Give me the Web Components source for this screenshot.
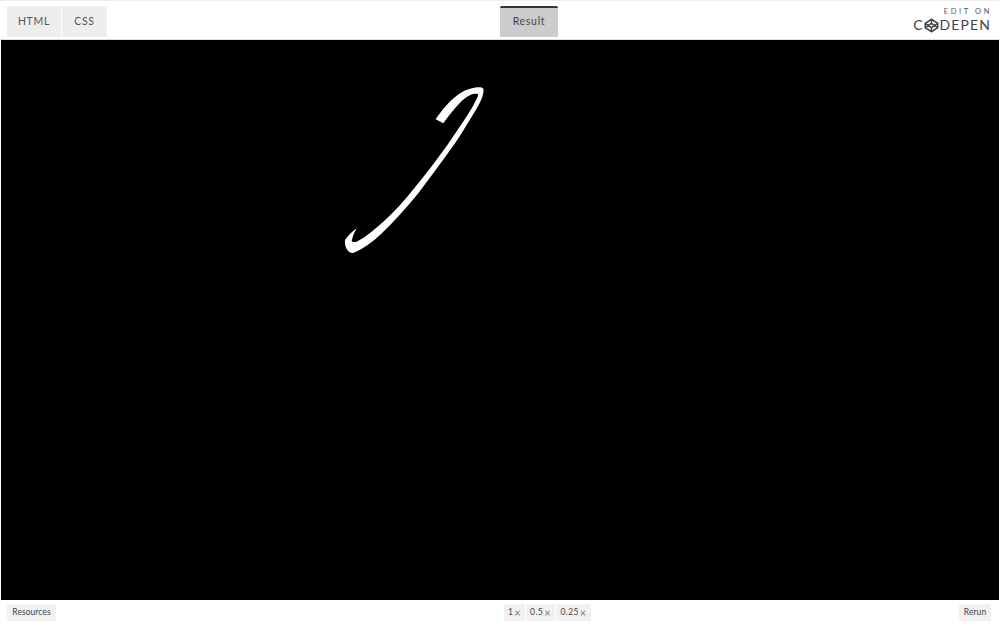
<!DOCTYPE html>
<html lang="en">
<head>
<meta charset="utf-8">
<title>CodePen embed</title>
<style>
  html, body { margin: 0; height: 100%; background: #fff; }
  body { font-family: Lato, "Liberation Sans", sans-serif; }
</style>
</head>
<body>
<pen-embed>
  <pen-header slot="header"></pen-header>
  <pen-stage slot="stage"></pen-stage>
  <pen-footer slot="footer"></pen-footer>
</pen-embed>

<script>
class PenEmbed extends HTMLElement {
  constructor() {
    super();
    this.attachShadow({ mode: "open" });
    this.shadowRoot.innerHTML = `
      <style>
        :host {
          display: flex;
          flex-direction: column;
          width: 1000px;
          height: 625px;
          overflow: hidden;
        }
        ::slotted(pen-stage) { flex: 1; min-height: 0; }
      </style>
      <slot name="header"></slot>
      <slot name="stage"></slot>
      <slot name="footer"></slot>
    `;
  }
}

class PenTab extends HTMLElement {
  constructor() {
    super();
    this.attachShadow({ mode: "open" });
    this.shadowRoot.innerHTML = `
      <style>
        :host {
          display: flex;
          align-items: center;
          justify-content: center;
          box-sizing: border-box;
          height: 31px;
          padding-bottom: 1px;
          background: #eeeeee;
          color: #555;
          font-size: 10.5px;
          letter-spacing: 0.7px;
        }
        :host([active]) {
          padding-bottom: 3px;
          background: #cccccc;
          border-top: 2px solid #333;
          border-radius: 2px 2px 0 0;
          color: #444;
        }
      </style>
      <slot></slot>
    `;
  }
}

class PenHeader extends HTMLElement {
  constructor() {
    super();
    this.attachShadow({ mode: "open" });
    this.shadowRoot.innerHTML = `
      <style>
        :host {
          display: grid;
          grid-template-columns: 1fr 1fr;
          align-items: end;
          box-sizing: border-box;
          height: 40px;
          padding: 0 7px 2px;
          background: #fff;
          border-top: 1px solid #eee;
          border-bottom: 1px solid #ddd;
        }
        .tabs { display: flex; gap: 1px; }
        .right { display: flex; justify-content: space-between; align-items: flex-start; }
        .logo { margin: 1px 3px 0 0; }
        pen-tab.html { width: 54px; }
        pen-tab.css { width: 45px; }
        pen-tab.result { width: 58px; }
      </style>
      <div class="tabs">
        <pen-tab class="html">HTML</pen-tab>
        <pen-tab class="css">CSS</pen-tab>
      </div>
      <div class="right">
        <pen-tab class="result" active>Result</pen-tab>
        <pen-logo class="logo"></pen-logo>
      </div>
    `;
  }
}

class PenLogo extends HTMLElement {
  constructor() {
    super();
    this.attachShadow({ mode: "open" });
    this.shadowRoot.innerHTML = `
      <style>
        :host {
          display: flex;
          flex-direction: column;
          align-items: flex-end;
          color: #444;
          font-family: Lato, sans-serif;
        }
        .edit {
          font-size: 7.5px;
          line-height: 9px;
          letter-spacing: 2.6px;
          margin-right: -2px;
          color: #555;
        }
        .name {
          display: flex;
          align-items: center;
          font-size: 14px;
          line-height: 16px;
          letter-spacing: 1.1px;
          margin-top: 1px;
          margin-right: -1px;
        }
        svg { width: 15px; height: 15px; margin: 0 1px 0 0; }
      </style>
      <div class="edit">EDIT ON</div>
      <div class="name">
        <span>C</span>
        <svg viewBox="0 0 24 24" fill="none" stroke="#444" stroke-width="2.4" stroke-linejoin="round">
          <path d="M12 2 22 8.5v7L12 22 2 15.5v-7z"/>
          <path d="M12 2v6.5M12 15.5V22M2 8.5l10 7 10-7M2 15.5l10-7 10 7"/>
        </svg>
        <span>DEPEN</span>
      </div>
    `;
  }
}

class PenStage extends HTMLElement {
  constructor() {
    super();
    this.attachShadow({ mode: "open" });
    this.shadowRoot.innerHTML = `
      <style>
        :host {
          display: block;
          margin: 0 1px;
          background: #000;
        }
        svg { display: block; width: 998px; height: 560px; }
      </style>
      <svg viewBox="1 40 998 560">
        <path fill="#fff" d="M435.7 119.3
          C441 111 450 100 460 93.3
          C466 89.5 474 87 480 87.3
          C482.5 87.5 483.8 88.5 483.6 91
          C483 99 477 108 471.7 116.7
          C466 126 461 134.5 455 143.3
          C444 159 431 176.5 418.3 193.3
          C406 208 394 222 380 235
          C372 242.5 362 249.5 353.3 253
          C351 253.5 349 252 347.3 250
          C345.5 247 344.5 243.5 345 240
          C348 235.5 352.5 231.5 356.7 228.3
          C354.5 232 352.5 236.5 351.7 241.2
          C353 242.2 355 242.3 356.7 241.7
          C366 237 375 229 383.3 221.7
          C395 211 406 199 416 186
          C427 173 437 159 447 145.5
          C451.5 139 455.5 133 459.5 127
          C465 119 471 110 474 104
          C476 100.5 477.8 97 478.3 94.3
          C477 93.5 475 93.5 473.3 94
          C468 95 461 101 455 108.3
          C451 113 447 118 443.3 123.3 Z"/>
      </svg>
    `;
  }
}

class PenButton extends HTMLElement {
  constructor() {
    super();
    this.attachShadow({ mode: "open" });
    this.shadowRoot.innerHTML = `
      <style>
        :host {
          display: flex;
          align-items: center;
          justify-content: center;
          box-sizing: border-box;
          height: 17px;
          padding-bottom: 1px;
          background: #f1f1f1;
          border-radius: 2px;
          color: #444;
          font-size: 8.5px;
          letter-spacing: 0.05px;
        }
      </style>
      <slot></slot>
    `;
  }
}

class PenFooter extends HTMLElement {
  constructor() {
    super();
    this.attachShadow({ mode: "open" });
    this.shadowRoot.innerHTML = `
      <style>
        :host {
          display: grid;
          grid-template-columns: 1fr 1fr;
          align-items: center;
          box-sizing: border-box;
          height: 25px;
          padding: 0 7px;
          background: #fff;
        }
        .right { display: flex; justify-content: space-between; align-items: center; }
        .zoom { display: flex; gap: 1px; margin-left: 4px; }
        .zoom pen-button { letter-spacing: 0.4px; }
        .x { color: #777; font-size: 11px; line-height: 1; margin-left: 1px; }
        .resources { justify-self: start; width: 49px; }
        .rerun { width: 32px; margin-right: 2px; }
        .z1 { width: 21px; }
        .z05 { width: 29px; }
        .z025 { width: 35px; }
      </style>
      <pen-button class="resources">Resources</pen-button>
      <div class="right">
        <div class="zoom">
          <pen-button class="z1">1<span class="x">×</span></pen-button>
          <pen-button class="z05">0.5<span class="x">×</span></pen-button>
          <pen-button class="z025">0.25<span class="x">×</span></pen-button>
        </div>
        <pen-button class="rerun">Rerun</pen-button>
      </div>
    `;
  }
}

customElements.define("pen-tab", PenTab);
customElements.define("pen-logo", PenLogo);
customElements.define("pen-header", PenHeader);
customElements.define("pen-stage", PenStage);
customElements.define("pen-button", PenButton);
customElements.define("pen-footer", PenFooter);
customElements.define("pen-embed", PenEmbed);
</script>
</body>
</html>
